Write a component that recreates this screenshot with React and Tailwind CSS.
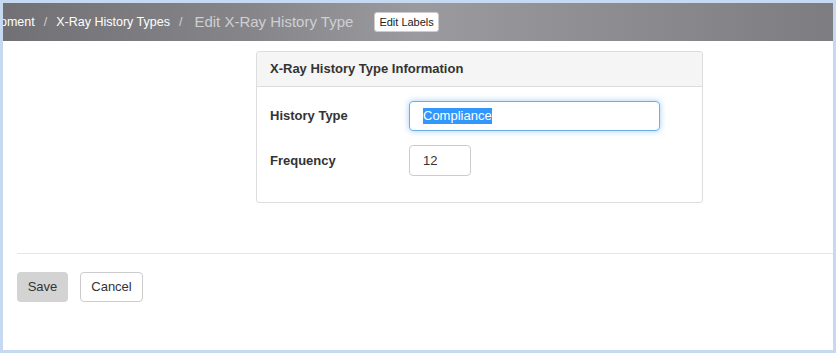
export default function App() {
  return (
    <div className="w-[836px] h-[353px] bg-[#c6d9f0] p-[3px] font-['Liberation_Sans',Arial,sans-serif]">
      <div className="h-full bg-white flex flex-col">
        {/* breadcrumb bar */}
        <div className="h-[38px] shrink-0 flex items-center overflow-hidden bg-[linear-gradient(90deg,#717175_0%,#86868a_30%,#9b9b9f_50%,#8c8c90_75%,#7c7c81_100%)]">
          <span className="-ml-[3px] text-[12.5px] text-white">oment</span>
          <span className="text-[12.5px] text-[#d0d0d2] mx-[9px]">/</span>
          <span className="text-[12.5px] text-white">X-Ray History Types</span>
          <span className="text-[12.5px] text-[#d0d0d2] ml-[9px] mr-[12px]">/</span>
          <span className="text-[15px] text-[#cfcfd2]">Edit X-Ray History Type</span>
          <button className="ml-[21px] h-[20px] px-[4px] bg-white border border-[#ccc] rounded-[3px] text-[11px] text-[#222] leading-none">
            Edit Labels
          </button>
        </div>

        {/* panel */}
        <div className="mt-[10px] ml-[253px] w-[447px] h-[152px] border border-[#ddd] rounded-[3px] flex flex-col">
          <div className="h-[35px] bg-[#f5f5f5] border-b border-[#ddd] flex items-center px-[13px] rounded-t-[3px]">
            <span className="text-[13px] font-bold text-[#333]">X-Ray History Type Information</span>
          </div>
          <div className="flex flex-col gap-[14px] pt-[14px] px-[13px]">
            <div className="flex items-center">
              <span className="w-[139px] text-[13px] font-bold text-[#333]">History Type</span>
              <div className="w-[251px] h-[30px] border border-[#66afe9] rounded-[4px] shadow-[0_0_6px_rgba(102,175,233,0.6)] flex items-center px-[13px]">
                <span className="text-[13px] bg-[#3297fd] text-white leading-[16px]">Compliance</span>
              </div>
            </div>
            <div className="flex items-center">
              <span className="w-[139px] text-[13px] font-bold text-[#333]">Frequency</span>
              <div className="w-[62px] h-[31px] border border-[#ccc] rounded-[4px] flex items-center px-[13px]">
                <span className="text-[13px] text-[#333]">12</span>
              </div>
            </div>
          </div>
        </div>

        {/* footer actions */}
        <div className="mt-[50px] ml-[14px] border-t border-[#e5e5e5]" />
        <div className="flex gap-[12px] mt-[18px] ml-[14px]">
          <button className="w-[51px] h-[30px] bg-[#d3d3d3] rounded-[4px] text-[13px] text-[#333]">Save</button>
          <button className="w-[63px] h-[30px] bg-white border border-[#ccc] rounded-[4px] text-[13px] text-[#333]">Cancel</button>
        </div>
      </div>
    </div>
  );
}
